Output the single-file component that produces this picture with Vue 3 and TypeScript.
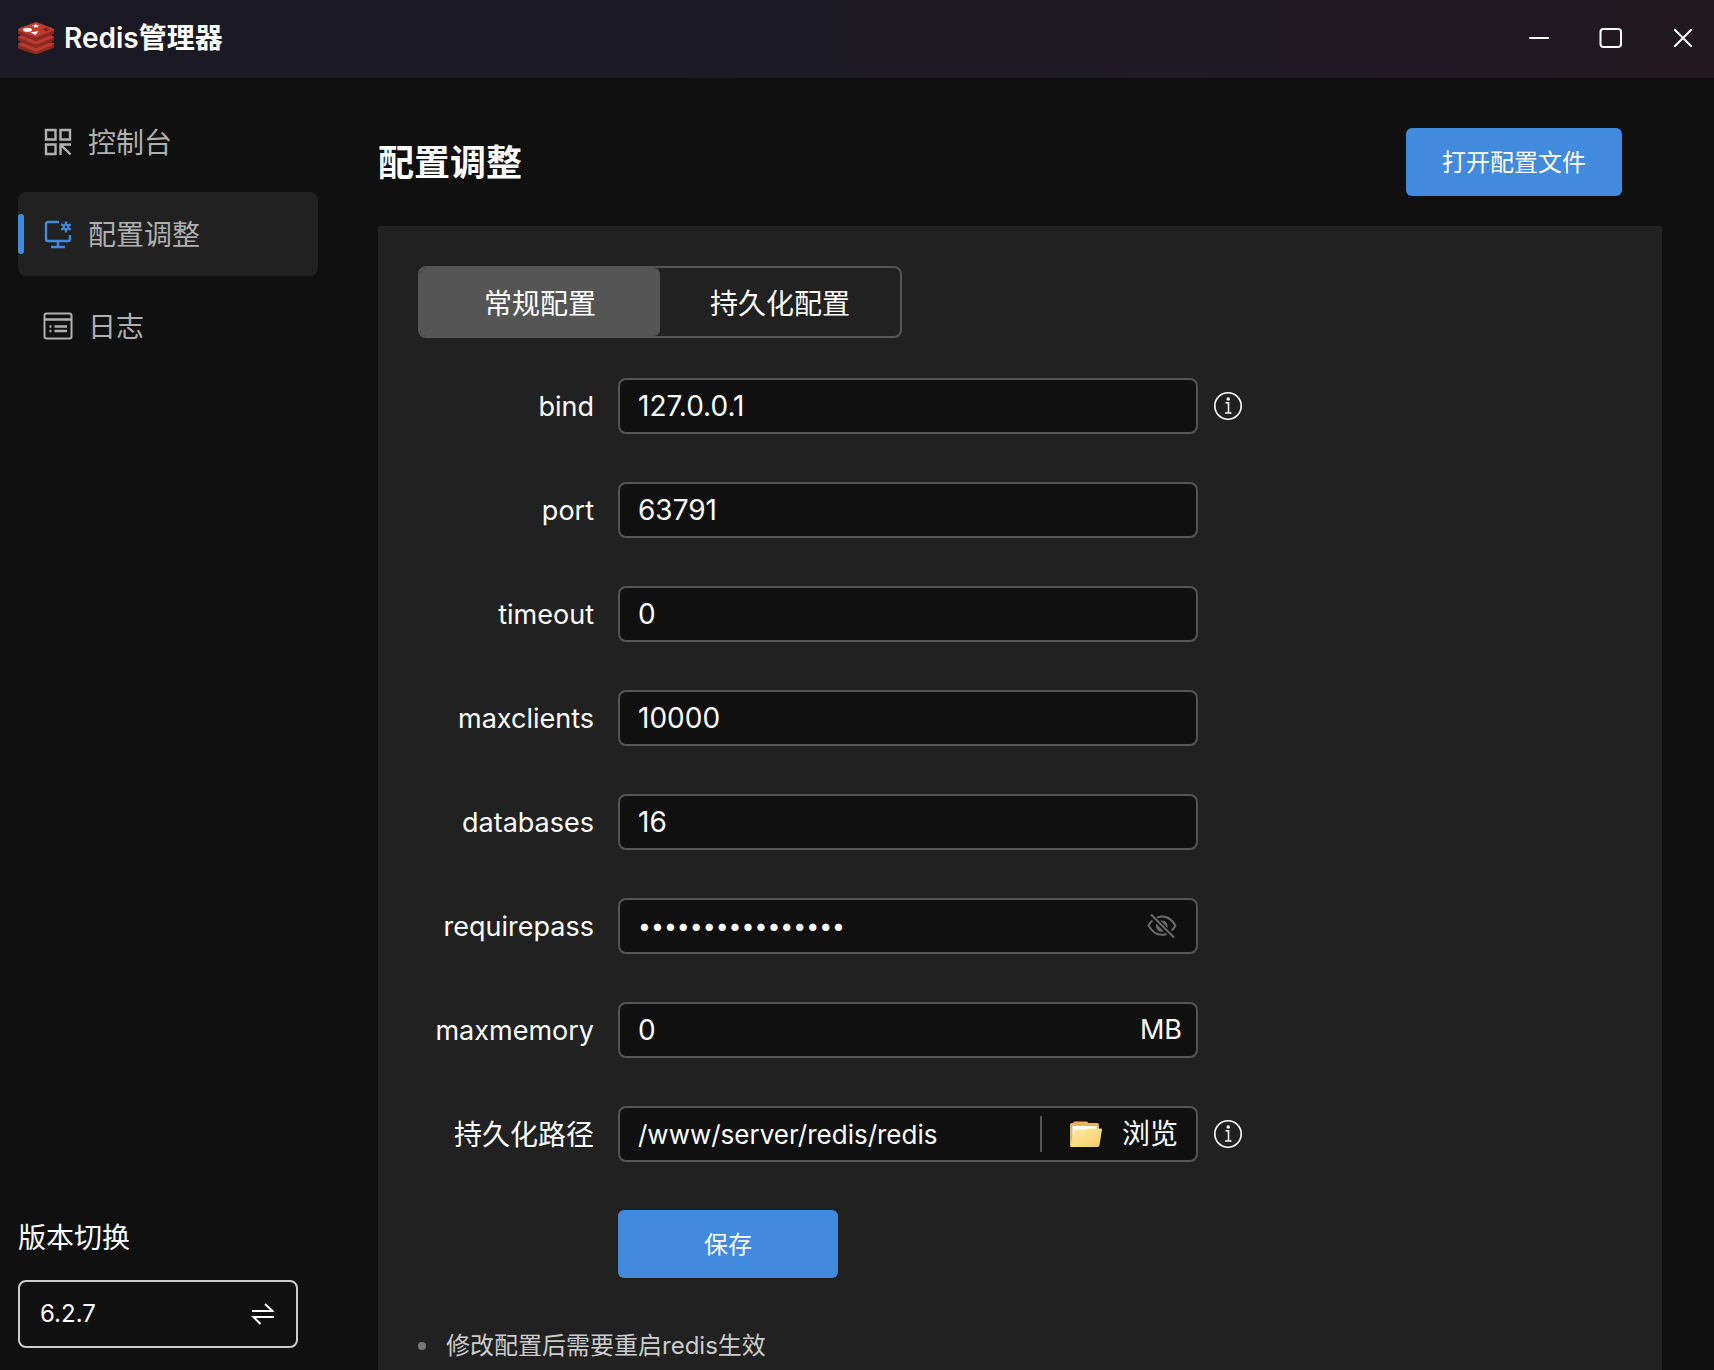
<script setup lang="ts">
import { reactive, ref } from 'vue'

type NavIcon = 'console' | 'config' | 'log'
interface NavItem { icon: NavIcon; label: string }
interface Field {
  key: string
  label: string
  type: 'text' | 'password'
  addon?: 'eye' | 'unit' | 'browse'
  info?: boolean
}

const navItems: NavItem[] = [
  { icon: 'console', label: '控制台' },
  { icon: 'config', label: '配置调整' },
  { icon: 'log', label: '日志' },
]
const activeNav = ref<NavIcon>('config')

const tabs = ['常规配置', '持久化配置']
const activeTab = ref(tabs[0])

const fields: Field[] = [
  { key: 'bind', label: 'bind', type: 'text', info: true },
  { key: 'port', label: 'port', type: 'text' },
  { key: 'timeout', label: 'timeout', type: 'text' },
  { key: 'maxclients', label: 'maxclients', type: 'text' },
  { key: 'databases', label: 'databases', type: 'text' },
  { key: 'requirepass', label: 'requirepass', type: 'password', addon: 'eye' },
  { key: 'maxmemory', label: 'maxmemory', type: 'text', addon: 'unit' },
  { key: 'dir', label: '持久化路径', type: 'text', addon: 'browse', info: true },
]
const values = reactive<Record<string, string>>({
  bind: '127.0.0.1',
  port: '63791',
  timeout: '0',
  maxclients: '10000',
  databases: '16',
  requirepass: 'abcdefgh12345678',
  maxmemory: '0',
  dir: '/www/server/redis/redis',
})
const showPassword = ref(false)
const inputType = (f: Field) => (f.type === 'password' && !showPassword.value ? 'password' : 'text')
</script>

<template>
  <div class="window">
    <header class="titlebar">
      <svg class="logo" viewBox="0 0 36 32" aria-hidden="true">
        <path fill="#8a2a22" d="M0 22v3.5c0 .8.8 1.200 2 1.700L16.500 32c1 .4 2 .4 3 0L34 26.500c1.300-.5 2-1 2-1.700V21z" />
        <path fill="#b93a2e" d="M0 21.500l18-7 18 7c0 .7-.8 1.200-2 1.700l-14.500 6c-1 .4-2 .4-3 0L2 23.200C.8 22.700 0 22.200 0 21.500z" />
        <path fill="#8a2a22" d="M0 15v3c0 .8.800 1.200 2 1.700l14.500 6c1 .4 2 .4 3 0l14.500-6c1.300-.5 2-1 2-1.700v-3z" />
        <path fill="#b93a2e" d="M0 14.500l18-7 18 7c0 .7-.8 1.200-2 1.700l-14.500 6c-1 .4-2 .4-3 0L2 16.200C.8 15.700 0 15.200 0 14.500z" />
        <path fill="#8a2a22" d="M0 7.500v3.500c0 .8.800 1.200 2 1.700l14.500 6c1 .4 2 .4 3 0l14.500-6c1.300-.5 2-1 2-1.700V7.500z" />
        <path fill="#c13c30" d="M0 7.500C0 6.800.8 6.400 2 5.900L16.500.4c1-.4 2-.4 3 0L34 5.900c1.200.5 2 .9 2 1.600s-.8 1.200-2 1.700l-14.500 5.600c-1 .4-2 .4-3 0L2 9.200C.8 8.700 0 8.200 0 7.500z" />
        <ellipse cx="9.500" cy="7.800" rx="4.500" ry="2" fill="#fff" />
        <path fill="#fff" d="M14 3.500l2.400-.2.800-1.300 1.300 1.100 2.500-.1-1.400 1.200.7 1.500-2.200-.6-2 .8.300-1.500zM12.500 10.200l8-.9-3 3.700z" />
        <path fill="#7c1f18" d="M24.500 7.500l4.500-2v4z" />
        <path fill="#9a2a21" d="M29 5.500l3 1.800-3 2.200z" />
      </svg>
      <h1 class="app-title">Redis管理器</h1>
      <div class="window-controls">
        <button type="button" aria-label="最小化">
          <svg viewBox="0 0 24 24"><path d="M3 12h18" /></svg>
        </button>
        <button type="button" aria-label="最大化">
          <svg viewBox="0 0 24 24"><rect x="1.500" y="3" width="20.500" height="18" rx="3" /></svg>
        </button>
        <button type="button" aria-label="关闭">
          <svg viewBox="0 0 24 24"><path d="M4 4l16 16M20 4L4 20" /></svg>
        </button>
      </div>
    </header>

    <div class="body">
      <aside class="sidebar">
        <nav class="nav">
          <a
            v-for="item in navItems"
            :key="item.icon"
            href="#"
            class="nav-item"
            :class="{ active: activeNav === item.icon }"
            @click.prevent="activeNav = item.icon"
          >
            <svg v-if="item.icon === 'console'" viewBox="0 0 28 28" aria-hidden="true">
              <path d="M2 2h9.500v9.500H2zM16.500 2H26v9.500h-9.500zM2 16.500h9.500V26H2zM16.500 27V16.500H27M17.500 17.500l9 9" />
            </svg>
            <svg v-else-if="item.icon === 'config'" viewBox="0 0 28 28" aria-hidden="true">
              <path d="M15 2H4Q2 2 2 4v15q0 2 2 2h20q2 0 2-2v-4M14 21v5.500M7 27h14" />
              <circle cx="22" cy="7" r="2.200" />
              <path d="M22 1.500v3M22 9.500v3M17.200 4.200l2.600 1.500M24.200 8.300l2.600 1.500M26.800 4.200l-2.600 1.500M19.800 8.300l-2.600 1.500" />
            </svg>
            <svg v-else viewBox="0 0 28 28" aria-hidden="true">
              <rect x="0.500" y="1.500" width="27" height="25" rx="2" />
              <path d="M1 7.500h26M5.500 14.500h2M5.500 19h2M10.500 14.500h12.500M10.500 19h12.500" />
            </svg>
            <span>{{ item.label }}</span>
          </a>
        </nav>
        <div class="version">
          <span id="version-label" class="version-label">版本切换</span>
          <button type="button" class="version-switch" aria-describedby="version-label">
            <span>6.2.7</span>
            <svg viewBox="0 0 24 24" aria-hidden="true">
              <path d="M2 9h20.500L15 2M24 15H3.500l7 7" />
            </svg>
          </button>
        </div>
      </aside>

      <main class="main">
        <div class="page-head">
          <h2>配置调整</h2>
          <button type="button" class="primary open-file">打开配置文件</button>
        </div>

        <section class="panel">
          <div class="tabs" role="tablist">
            <button
              v-for="tab in tabs"
              :key="tab"
              type="button"
              role="tab"
              :aria-selected="activeTab === tab"
              :class="{ active: activeTab === tab }"
              @click="activeTab = tab"
            >{{ tab }}</button>
          </div>

          <form class="form" @submit.prevent>
            <div v-for="f in fields" :key="f.key" class="row">
              <label :for="f.key" :class="{ cjk: f.key === 'dir' }">{{ f.label }}</label>
              <div class="field">
                <input
                  :id="f.key"
                  v-model="values[f.key]"
                  :type="inputType(f)"
                  :class="{ path: f.addon === 'browse' }"
                  autocomplete="off"
                />
                <button
                  v-if="f.addon === 'eye'"
                  type="button"
                  class="eye"
                  aria-label="显示密码"
                  @click="showPassword = !showPassword"
                >
                  <svg viewBox="0 0 30 24">
                    <path d="M10 3.600C11.500 3 13.200 2.500 15 2.500c6 0 10.500 4 13.500 9-1 1.800-2.300 3.500-3.900 5M19.500 20c-1.400.5-2.900.8-4.500.8-6 0-10.500-4-13.500-9.300C2.500 9.800 3.800 8 5.500 6.600" />
                    <path d="M4 .5L27 23.500" />
                    <path class="fill" d="M13.500 6.500a6 6 0 0 1 7 7.300zM9.300 9.800l7.500 7.700A6 6 0 0 1 9.300 9.800z" />
                  </svg>
                </button>
                <span v-else-if="f.addon === 'unit'" class="unit">MB</span>
                <button v-else-if="f.addon === 'browse'" type="button" class="browse">
                  <svg viewBox="0 0 32 26" aria-hidden="true">
                    <defs>
                      <linearGradient id="folder-front" x1="0" y1="0" x2="1" y2="1">
                        <stop offset="0" stop-color="#fdebb0" />
                        <stop offset="1" stop-color="#f6cd5c" />
                      </linearGradient>
                    </defs>
                    <path fill="#e5b262" d="M0 4q0-2 2-2h1l1-1.500h13L18.500 2H27q2 0 2 2v20H0z" />
                    <path fill="#fff" d="M2.500 5H26q1 0 1 1v10H2.500z" />
                    <path fill="url(#folder-front)" d="M6 8.500h9L17 7.500h14q1 0 1 1L29.500 24q-.3 2-2 2H1.500Q0 26 .2 24.500L4.500 9.500q.4-1 1.500-1z" />
                  </svg>
                  <span>浏览</span>
                </button>
              </div>
              <svg v-if="f.info" class="info" viewBox="0 0 28 28" role="img" aria-label="说明">
                <circle cx="14" cy="14" r="13.200" />
                <path d="M11.500 10.800h3v10M11 21h6.500" />
                <circle class="dot" cx="14.200" cy="7" r="1.700" />
              </svg>
            </div>
            <button type="submit" class="primary save">保存</button>
          </form>

          <ul class="tips">
            <li>修改配置后需要重启redis生效</li>
          </ul>
        </section>
      </main>
    </div>
  </div>
</template>

<style>
body {
  margin: 0;
  background: #101010;
}
</style>

<style scoped>
* {
  box-sizing: border-box;
}
.window {
  display: flex;
  flex-direction: column;
  height: 100vh;
  overflow: hidden;
  background: #101010;
  color: #fff;
  font-family: Inter, "Noto Sans CJK SC", sans-serif;
  font-size: 28px;
  line-height: 40px;
}
button,
input {
  margin: 0;
  padding: 0;
  border: 0;
  background: none;
  color: inherit;
  font: inherit;
}
button {
  cursor: pointer;
}
svg {
  display: block;
  flex: none;
  fill: none;
  stroke: currentColor;
  stroke-width: 2;
}
.titlebar {
  display: flex;
  flex: none;
  align-items: center;
  height: 78px;
  padding: 0 11px 2px 18px;
  background: linear-gradient(90deg, #1b1a24 40%, #201923 80%, #21191f);
}
.logo {
  width: 36px;
  height: 32px;
  stroke: none;
}
.app-title {
  flex: 1;
  margin: 0 0 0 10px;
  font-size: 28px;
  font-weight: 600;
}
.window-controls {
  display: flex;
  gap: 32px;
}
.window-controls button {
  display: grid;
  place-items: center;
  width: 40px;
  height: 40px;
}
.window-controls svg {
  width: 24px;
  height: 24px;
  stroke-linecap: round;
}
.body {
  display: flex;
  flex: 1;
  min-height: 0;
}
.sidebar {
  display: flex;
  flex: none;
  flex-direction: column;
  justify-content: space-between;
  width: 336px;
  padding: 22px 18px;
}
.nav {
  display: flex;
  flex-direction: column;
  gap: 8px;
}
.nav-item {
  position: relative;
  display: flex;
  align-items: center;
  gap: 16px;
  height: 84px;
  padding-left: 26px;
  border-radius: 8px;
  color: #b0b0b0;
  text-decoration: none;
}
.nav-item span {
  padding-top: 2px;
}
.nav-item svg {
  width: 28px;
  height: 28px;
  overflow: visible;
}
.nav-item path {
  stroke-width: 2.4;
}
.nav-item.active {
  background: #212121;
}
.nav-item.active svg {
  color: #428add;
}
.nav-item.active::before {
  position: absolute;
  top: 22px;
  bottom: 22px;
  left: 0;
  width: 6px;
  border-radius: 3px;
  background: #428add;
  content: "";
}
.version {
  display: flex;
  flex-direction: column;
  gap: 22px;
}
.version-switch {
  display: flex;
  align-items: center;
  justify-content: space-between;
  width: 280px;
  height: 68px;
  padding: 0 22px 0 20px;
  border: 2px solid #ccc;
  border-radius: 8px;
  font-size: 24px;
}
.version-switch svg {
  width: 24px;
  height: 24px;
}
.main {
  display: flex;
  flex: 1;
  flex-direction: column;
  min-width: 0;
  padding: 50px 52px 0 42px;
}
.page-head {
  display: flex;
  align-items: center;
  justify-content: space-between;
  padding: 0 40px 30px 0;
}
.page-head h2 {
  margin: 0;
  padding-top: 2px;
  font-size: 36px;
  font-weight: 700;
}
.primary {
  height: 68px;
  padding-top: 2px;
  border-radius: 6px;
  background: #428add;
  font-size: 24px;
}
.open-file {
  width: 216px;
}
.panel {
  flex: 1;
  padding: 40px;
  background: #212121;
}
.tabs {
  display: flex;
  width: 484px;
  height: 72px;
  border: 2px solid #555;
  border-radius: 8px;
}
.tabs button {
  flex: 1;
  padding-top: 4px;
  border-radius: 6px;
}
.tabs .active {
  background: #555;
}
.form {
  display: flex;
  flex-direction: column;
  gap: 48px;
  margin-top: 40px;
}
.row {
  display: flex;
  align-items: center;
}
.row label {
  width: 176px;
  margin-right: 24px;
  padding-top: 2px;
  font-size: 27px;
  text-align: right;
  white-space: nowrap;
}
.row label.cjk {
  font-size: 28px;
}
.field {
  display: flex;
  align-items: center;
  width: 580px;
  height: 56px;
  border: 2px solid #555;
  border-radius: 8px;
  background: #101010;
}
.field input {
  flex: 1;
  min-width: 0;
  height: 100%;
  padding: 0 18px;
  outline: 0;
}
.field input[type="password"] {
  font-size: 23px;
}
.field input.path {
  font-size: 26px;
}
.eye {
  margin-right: 19px;
  color: #6c6c6c;
}
.eye svg {
  width: 30px;
  height: 24px;
}
.fill {
  fill: currentColor;
  stroke: none;
}
.unit {
  margin-right: 14px;
  font-size: 27px;
}
.browse {
  display: flex;
  align-items: center;
  gap: 20px;
  height: 36px;
  padding: 0 18px 0 28px;
  border-left: 2px solid #555;
}
.browse svg {
  width: 32px;
  height: 26px;
  stroke: none;
}
.info {
  width: 28px;
  height: 28px;
  margin-left: 16px;
  stroke-width: 1.6;
}
.info .dot {
  fill: currentColor;
  stroke: none;
}
.save {
  width: 220px;
  margin-left: 200px;
}
.tips {
  margin: 48px 0 0;
  padding: 0;
  color: #ccc;
  font-size: 24px;
  list-style: none;
}
.tips li {
  display: flex;
  align-items: center;
  gap: 20px;
}
.tips li::before {
  width: 8px;
  height: 8px;
  border-radius: 50%;
  background: #777;
  content: "";
}
</style>
